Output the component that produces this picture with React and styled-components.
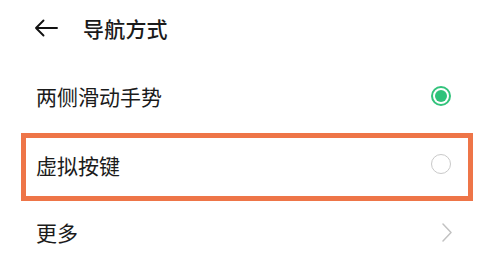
import React from "react";
import styled, { createGlobalStyle } from "styled-components";

const Global = createGlobalStyle`
  html, body {
    margin: 0;
    padding: 0;
    background: #fff;
  }
  body {
    font-family: "Noto Sans CJK SC", "Noto Sans", sans-serif;
    color: #1b1b1b;
  }
`;

const Page = styled.div`
  width: 488px;
  height: 272px;
  overflow: hidden;
  background: #fff;
`;

const Header = styled.div`
  height: 62px;
  padding: 0 0 6px 34px;
  box-sizing: border-box;
  display: flex;
  align-items: center;
  gap: 25px;
`;

const Title = styled.div`
  font-size: 21px;
  font-weight: 500;
  letter-spacing: 0.2px;
`;

const List = styled.div`
  display: flex;
  flex-direction: column;
`;

const Row = styled.div`
  position: relative;
  height: 68px;
  padding: 0 ${(p) => p.padRight || 37}px 0 36px;
  display: flex;
  align-items: center;
  justify-content: space-between;
  font-size: 21px;

  ${(p) =>
    p.highlight &&
    `
    &::after {
      content: "";
      position: absolute;
      left: 21px;
      right: 15px;
      top: 3px;
      bottom: -3px;
      border: 5px solid #ee7548;
      pointer-events: none;
    }
  `}
`;

const Label = styled.span`
  padding-top: ${(p) => p.shift || 0}px;
`;

const Radio = styled.span`
  box-sizing: border-box;
  width: 20px;
  height: 20px;
  border-radius: 50%;
  border: ${(p) => (p.checked ? "2px solid #33c37c" : "1.5px solid #c9c9c9")};
  display: flex;
  align-items: center;
  justify-content: center;
  margin-top: ${(p) => p.shift || 0}px;

  &::after {
    content: "";
    width: 12px;
    height: 12px;
    border-radius: 50%;
    background: ${(p) => (p.checked ? "#2ec27a" : "transparent")};
  }
`;

const BackArrow = () => (
  <svg width="24" height="18" viewBox="0 0 24 18" fill="none">
    <path
      d="M23 9H2M9.5 1.5L2 9l7.5 7.5"
      stroke="#111"
      strokeWidth="1.9"
      strokeLinecap="round"
      strokeLinejoin="round"
    />
  </svg>
);

const Chevron = () => (
  <svg width="10" height="19" viewBox="0 0 10 19" fill="none">
    <path
      d="M1 1l8 8.5L1 18"
      stroke="#c2c2c2"
      strokeWidth="1.5"
      strokeLinecap="round"
      strokeLinejoin="round"
    />
  </svg>
);

export default function App() {
  return (
    <Page>
      <Global />
      <Header>
        <BackArrow />
        <Title>导航方式</Title>
      </Header>
      <List>
        <Row>
          <Label>两侧滑动手势</Label>
          <Radio checked />
        </Row>
        <Row highlight>
          <Label shift={2}>虚拟按键</Label>
          <Radio shift={0} />
        </Row>
        <Row padRight={36}>
          <Label>更多</Label>
          <Chevron />
        </Row>
      </List>
    </Page>
  );
}
